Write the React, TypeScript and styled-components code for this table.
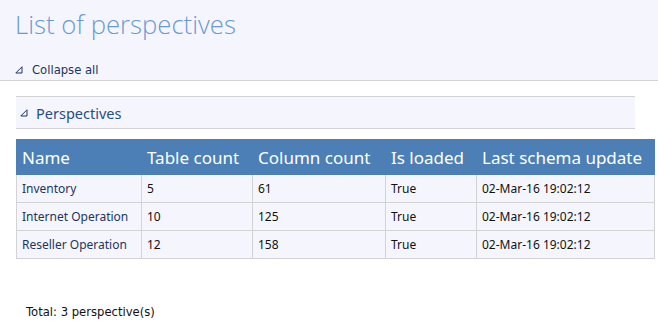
import React from "react";
import styled, { createGlobalStyle } from "styled-components";

const Global = createGlobalStyle`
  html, body { margin: 0; padding: 0; background: #ffffff; }
  body { font-family: "Noto Sans", "Open Sans", sans-serif; }
`;

const Header = styled.header`
  background: #f5f6fd;
  border-bottom: 1px solid #d3d3d3;
  height: 80px;
  padding: 0 0 0 15px;
  box-sizing: content-box;
  display: flex;
  flex-direction: column;
`;

const Title = styled.h1`
  margin: 0;
  padding-top: 7px;
  font-family: "Open Sans", sans-serif;
  font-weight: 300;
  font-size: 25.7px;
  line-height: 36px;
  color: #6a9ad6;
`;

const CollapseRow = styled.div`
  display: flex;
  align-items: center;
  gap: 9px;
  margin-top: 20px;
  font-family: "DejaVu Sans", Verdana, sans-serif;
  font-size: 11.6px;
  color: #1a3564;
  line-height: 14px;
`;

const Tri = styled.svg`
  width: 8px;
  height: 8px;
  flex: none;
`;

const Content = styled.main`
  padding: 15px 4px 0 16px;
`;

const SectionHeader = styled.div`
  width: 615px;
  height: 31px;
  background: #f5f6fd;
  border-top: 1px solid #d3d3d3;
  border-bottom: 1px solid #d3d3d3;
  display: flex;
  align-items: center;
  gap: 8px;
  padding-left: 4px;
  box-sizing: content-box;
  font-size: 14.5px;
  color: #1f4d8a;
`;

const Table = styled.table`
  margin-top: 10px;
  border-collapse: collapse;
  width: 638px;
  table-layout: fixed;
`;

const Th = styled.th<{ $w: number }>`
  width: ${(p) => p.$w}px;
  background: #4b7fb6;
  color: #ffffff;
  font-weight: 400;
  font-size: 17px;
  text-align: left;
  height: 35px;
  padding: 0 0 0 5px;
  box-sizing: border-box;
  white-space: nowrap;
  border: 1px solid #4b7fb6;
`;

const Td = styled.td<{ $link?: boolean }>`
  background: #f5f6fd;
  border: 1px solid #d3d3d3;
  height: 28px;
  padding: 0 0 0 5px;
  box-sizing: border-box;
  font-size: 12px;
  color: ${(p) => (p.$link ? "#1a3564" : "#111111")};
  white-space: nowrap;
`;

const Total = styled.div`
  margin-top: 46px;
  padding-left: 10px;
  font-family: "DejaVu Sans", Verdana, sans-serif;
  font-size: 11.6px;
  color: #111111;
`;

const Triangle = () => (
  <Tri viewBox="0 0 8 8">
    <path d="M7 0.8 L7 7 L0.8 7 Z" fill="none" stroke="#1a3564" strokeWidth="1" />
  </Tri>
);

const columns = [
  { label: "Name", w: 125 },
  { label: "Table count", w: 111 },
  { label: "Column count", w: 133 },
  { label: "Is loaded", w: 91 },
  { label: "Last schema update", w: 178 },
];

const rows = [
  ["Inventory", "5", "61", "True", "02-Mar-16 19:02:12"],
  ["Internet Operation", "10", "125", "True", "02-Mar-16 19:02:12"],
  ["Reseller Operation", "12", "158", "True", "02-Mar-16 19:02:12"],
];

export default function App() {
  return (
    <>
      <Global />
      <Header>
        <Title>List of perspectives</Title>
        <CollapseRow>
          <Triangle />
          <span>Collapse all</span>
        </CollapseRow>
      </Header>
      <Content>
        <SectionHeader>
          <Triangle />
          <span>Perspectives</span>
        </SectionHeader>
        <Table>
          <thead>
            <tr>
              {columns.map((c) => (
                <Th key={c.label} $w={c.w}>
                  {c.label}
                </Th>
              ))}
            </tr>
          </thead>
          <tbody>
            {rows.map((r) => (
              <tr key={r[0]}>
                {r.map((v, i) => (
                  <Td key={i} $link={i === 0}>
                    {v}
                  </Td>
                ))}
              </tr>
            ))}
          </tbody>
        </Table>
        <Total>Total: 3 perspective(s)</Total>
      </Content>
    </>
  );
}
